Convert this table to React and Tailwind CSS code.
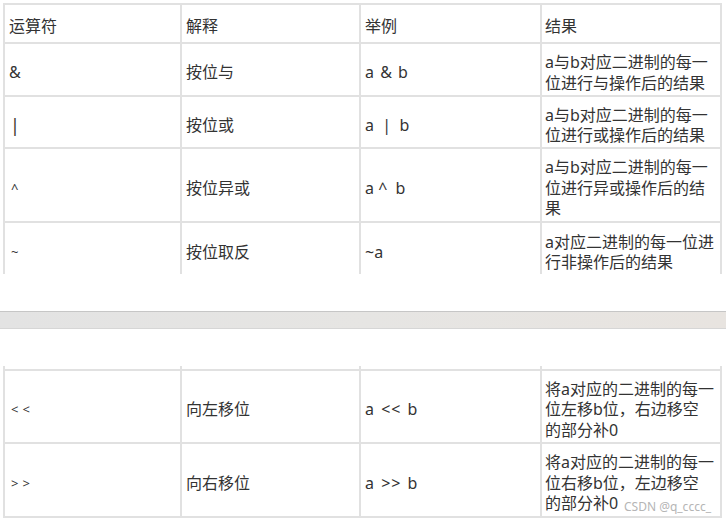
import React from "react";

const cell =
  "bg-white flex items-center pt-[6px] px-[4px] text-[16px] leading-[20.5px] text-[#333]";
const cellR =
  "bg-white flex items-center pt-[6px] px-[3px] text-[16px] leading-[20.5px] text-[#333]";
const sym = "text-[13px] tracking-[4px] pl-[2px]";

function Lines({ lines }) {
  return (
    <span>
      {lines.map((l, i) => (
        <React.Fragment key={i}>
          {l}
          {i < lines.length - 1 ? <br /> : null}
        </React.Fragment>
      ))}
    </span>
  );
}

export default function App() {
  return (
    <div className="relative w-[726px] h-[520px] overflow-hidden bg-white font-[Noto_Sans,Noto_Sans_CJK_SC,sans-serif]">
      {/* Table 1 */}
      <div className="ml-[3px] mt-[3px] w-[719px] h-[271px] overflow-hidden">
        <div className="grid grid-cols-[175px_177px_179px_178px] grid-rows-[37px_51px_50px_72px_52px] gap-[2px] p-[2px] bg-[#e1e1e1]">
          <div className={cell}>运算符</div>
          <div className={cell}>解释</div>
          <div className={cell}>举例</div>
          <div className={cellR}>结果</div>

          <div className={cell}>&amp;</div>
          <div className={cell}>按位与</div>
          <div className={cell}>
            <span className="whitespace-pre">
              a <span className="inline-block ml-[2px] mr-[2px]">&amp;</span> b
            </span>
          </div>
          <div className={cellR}>
            <Lines lines={["a与b对应二进制的每一", "位进行与操作后的结果"]} />
          </div>

          <div className={cell}>
            <span className="pl-[1px] text-[18px] leading-[20.5px] text-[#3a342c]">|</span>
          </div>
          <div className={cell}>按位或</div>
          <div className={cell}>
            <span className="whitespace-pre">a  |  b</span>
          </div>
          <div className={cellR}>
            <Lines lines={["a与b对应二进制的每一", "位进行或操作后的结果"]} />
          </div>

          <div className={cell}>
            <span className={sym}>^</span>
          </div>
          <div className={cell}>按位异或</div>
          <div className={cell}>
            <span className="whitespace-pre">a ^  b</span>
          </div>
          <div className={cellR}>
            <Lines lines={["a与b对应二进制的每一", "位进行异或操作后的结", "果"]} />
          </div>

          <div className={cell}>
            <span className={sym}>~</span>
          </div>
          <div className={cell}>按位取反</div>
          <div className={cell}>~a</div>
          <div className={cellR}>
            <Lines lines={["a对应二进制的每一位进", "行非操作后的结果"]} />
          </div>
        </div>
      </div>

      {/* page separator */}
      <div className="mt-[37px] h-[18px] border-t border-b border-t-[#c6c6c6] border-b-[#d6d6d6] bg-gradient-to-r from-[#e3e3e3] via-[#e6e5e3] to-[#e8e4e0]" />

      {/* Table 2 */}
      <div className="ml-[3px] mt-[37px] w-[719px]">
        <div className="grid grid-cols-[175px_177px_179px_178px] grid-rows-[3px_71px_72px] gap-[2px] px-[2px] pb-[2px] bg-[#e1e1e1]">
          <div className="bg-white" />
          <div className="bg-white" />
          <div className="bg-white" />
          <div className="bg-white" />

          <div className={cell}>
            <span className={sym}>&lt;&lt;</span>
          </div>
          <div className={cell}>向左移位</div>
          <div className={cell}>
            <span className="whitespace-pre">
              a <span className="inline-block ml-[3px] mr-[2px] tracking-[1px]">&lt;&lt;</span> b
            </span>
          </div>
          <div className={cellR}>
            <Lines lines={["将a对应的二进制的每一", "位左移b位，右边移空", "的部分补0"]} />
          </div>

          <div className={cell}>
            <span className={sym}>&gt;&gt;</span>
          </div>
          <div className={cell}>向右移位</div>
          <div className={cell}>
            <span className="whitespace-pre">
              a <span className="inline-block ml-[3px] mr-[2px] tracking-[1px]">&gt;&gt;</span> b
            </span>
          </div>
          <div className={cellR}>
            <Lines lines={["将a对应的二进制的每一", "位右移b位，左边移空", "的部分补0"]} />
          </div>
        </div>
      </div>

      <div className="absolute right-[15px] bottom-[5px] text-[12px] leading-[16px] text-[#b5b5b5]">
        CSDN @q_cccc_
      </div>
    </div>
  );
}
